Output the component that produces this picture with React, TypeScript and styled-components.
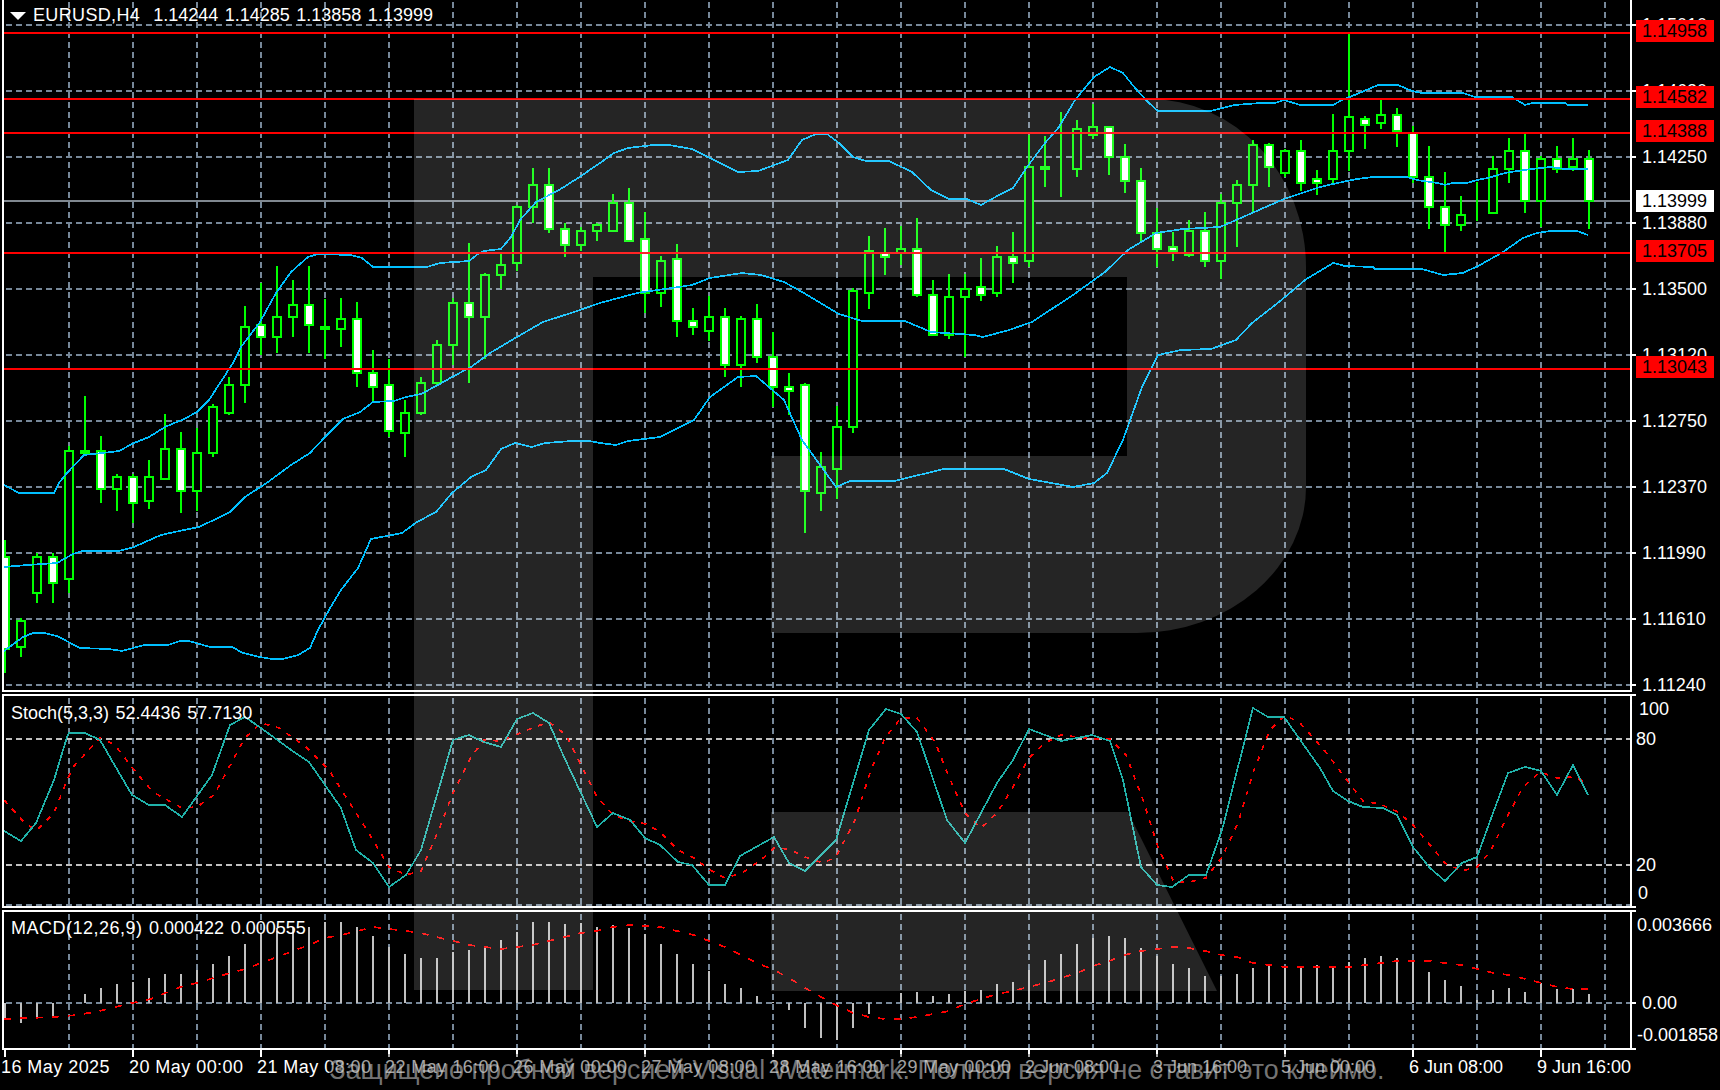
import React from 'react';
import styled, { createGlobalStyle } from 'styled-components';

const GlobalStyle = createGlobalStyle`
  html, body { margin: 0; padding: 0; background: #000; }
  #root { width: 1720px; height: 1090px; overflow: hidden; }
`;

const FONT = `"Liberation Sans", Arial, sans-serif`;
const GRID = '#778899';

// [high, bodyTop, bodyBottom, low, bearish (white body)]
const CANDLES: [number, number, number, number, number][] = [
  [540,557,649,673,1],[618,621,647,657,0],[553,557,593,603,0],[553,557,583,603,1],[446,451,579,593,0],
  [396,451,453,455,1],[436,451,489,503,1],[474,477,489,511,0],[474,477,503,523,1],[460,477,501,509,0],
  [414,449,479,479,0],[432,449,491,513,1],[428,453,491,511,0],[404,407,453,457,0],[377,385,413,415,0],
  [306,327,385,403,0],[283,325,337,355,1],[266,317,337,353,0],[280,305,317,337,0],[266,305,325,353,1],
  [299,327,329,359,1],[298,319,329,347,0],[302,319,373,387,1],[350,373,387,403,1],[359,385,431,437,1],
  [400,413,433,457,0],[377,383,413,415,0],[340,345,383,385,0],[298,303,345,365,0],[243,303,317,383,1],
  [273,275,317,359,0],[254,265,275,289,0],[205,207,263,271,0],[168,185,207,223,0],[168,185,229,233,1],
  [223,229,245,257,1],[227,231,245,251,0],[223,225,231,241,0],[194,203,231,231,0],[188,203,241,241,1],
  [212,239,293,313,1],[256,261,293,307,0],[244,259,321,337,1],[308,321,327,335,1],[296,317,331,341,0],
  [308,317,365,377,1],[316,319,365,387,0],[304,319,357,363,1],[332,357,387,407,1],[373,387,391,415,1],
  [383,385,491,533,1],[452,467,493,511,0],[406,427,469,499,0],[288,291,427,433,0],[236,251,293,309,0],
  [228,253,257,275,1],[226,249,253,265,0],[218,249,295,297,1],[280,295,335,335,1],[274,297,335,339,0],
  [274,289,297,357,0],[258,287,295,301,1],[246,257,293,297,0],[232,257,263,283,1],[135,167,261,267,0],
  [136,167,169,187,1],[112,169,169,197,1],[120,129,169,177,0],[104,127,135,139,0],[127,127,157,175,1],
  [144,157,181,193,1],[168,181,233,241,1],[208,233,249,267,1],[232,247,251,261,1],[220,231,255,257,0],
  [212,231,261,267,1],[194,203,261,279,0],[180,185,203,247,0],[140,145,185,213,0],[143,145,167,187,1],
  [149,151,173,177,0],[140,151,183,191,1],[170,179,183,195,1],[114,151,179,185,0],[34,117,151,171,0],
  [116,119,125,149,1],[100,115,123,129,0],[108,115,131,147,1],[126,133,177,183,1],[146,177,207,229,1],
  [172,207,225,253,1],[196,215,225,231,0],[182,213,213,221,1],[156,169,213,213,0],[138,151,169,183,0],
  [134,151,201,213,1],[156,159,201,227,0],[146,159,169,173,1],[138,159,167,171,0],[150,159,201,229,1],
];

const UPPER = [4,485,19,493,54,493,59,483,67,473,84,455,111,452,119,451,134,443,149,437,165,427,184,419,197,412,209,400,233,363,241,347,260,322,276,293,291,272,308,257,318,254,350,255,362,258,373,267,427,267,440,263,469,261,478,254,484,251,501,249,511,237,520,220,536,202,559,190,578,178,600,163,614,153,628,148,653,145,669,145,692,149,710,158,738,172,758,171,788,160,802,140,816,134,827,134,839,143,853,157,866,161,889,161,912,172,931,190,949,199,967,199,981,205,999,195,1013,188,1027,167,1045,143,1059,127,1075,100,1094,77,1110,67,1123,73,1135,88,1149,103,1158,111,1211,111,1234,105,1261,103,1275,103,1284,100,1300,105,1333,105,1342,100,1357,94,1378,85,1398,85,1412,91,1422,93,1463,93,1475,97,1512,97,1525,105,1532,103,1565,103,1568,105,1588,105];
const MIDDLE = [4,567,27,565,57,563,73,554,82,551,119,551,134,547,161,535,184,530,199,527,218,518,230,512,245,497,268,482,291,465,310,453,325,437,343,419,360,412,373,402,394,401,406,397,421,394,438,385,452,377,471,367,490,353,517,337,543,322,574,312,600,303,637,293,692,285,710,278,742,273,761,275,784,282,802,292,839,314,862,321,905,321,931,332,974,335,983,337,1009,330,1032,322,1073,295,1105,272,1128,250,1156,233,1183,229,1220,227,1243,217,1284,199,1320,187,1333,184,1347,181,1357,179,1373,177,1407,177,1417,180,1437,183,1445,185,1453,183,1467,183,1477,180,1488,178,1505,173,1517,171,1532,169,1550,167,1565,169,1588,169];
const LOWER = [4,651,23,637,33,633,44,633,57,636,80,648,109,649,122,651,144,645,168,645,180,641,189,641,210,647,232,647,243,653,260,657,272,659,283,659,298,655,310,648,318,630,329,610,341,590,358,568,371,539,402,533,417,522,436,512,452,493,471,477,486,470,501,449,515,443,532,447,545,443,572,441,589,441,600,443,616,445,628,441,660,437,694,420,710,397,738,377,756,376,784,400,802,440,836,487,850,481,894,481,944,469,1004,469,1029,479,1073,487,1094,483,1107,473,1123,440,1142,387,1158,355,1181,350,1211,349,1236,340,1252,323,1279,302,1305,280,1320,271,1333,263,1345,266,1373,267,1375,269,1422,269,1443,275,1463,273,1480,265,1503,252,1523,238,1537,233,1550,231,1577,231,1588,235];

const STOCH_K = [4,831,21,841,36,823,54,780,67,737,69,733,85,733,100,740,132,795,149,805,165,805,182,817,212,775,230,725,245,717,261,728,294,752,309,762,341,808,356,850,373,863,389,887,406,875,421,850,453,740,469,735,484,742,501,747,517,719,533,713,549,723,564,757,597,827,613,813,630,820,645,838,660,845,678,862,692,865,709,885,725,885,740,856,774,837,789,863,805,871,836,840,869,730,886,709,901,714,917,732,947,820,965,843,997,783,1013,760,1029,729,1061,741,1092,735,1110,741,1123,780,1141,867,1157,885,1172,887,1189,875,1206,875,1222,830,1253,708,1268,717,1284,717,1320,768,1333,791,1348,801,1363,807,1383,808,1397,815,1413,847,1430,868,1445,881,1462,863,1477,857,1493,813,1508,773,1525,767,1541,771,1557,795,1573,765,1588,795];
const STOCH_D = [4,800,23,821,36,831,54,813,63,790,73,767,100,738,115,745,134,770,153,792,182,808,197,807,214,795,233,760,245,738,261,723,279,728,306,747,329,770,346,797,373,840,389,867,406,875,421,871,440,827,453,793,471,757,484,740,501,741,532,728,549,722,566,735,582,767,597,797,613,815,630,821,646,824,660,832,678,850,694,858,710,870,725,878,742,873,761,860,774,848,789,849,805,857,823,863,836,857,855,820,871,770,885,738,901,718,917,718,935,742,949,777,965,813,981,828,997,813,1013,787,1029,758,1045,743,1061,735,1094,739,1110,739,1126,755,1142,797,1158,847,1174,882,1190,882,1206,878,1222,857,1238,823,1254,770,1270,730,1285,715,1300,723,1325,751,1343,775,1363,801,1380,804,1398,812,1413,825,1430,845,1445,863,1462,871,1477,867,1490,852,1507,817,1523,787,1540,772,1557,778,1573,777,1588,783];
const MACD_SIGNAL = [4,1019,54,1017,77,1015,100,1011,119,1006,132,1003,151,999,180,987,197,983,230,973,245,969,261,963,277,957,293,951,309,945,325,938,341,935,358,931,373,927,389,929,406,931,421,933,436,937,453,941,469,945,485,947,501,949,517,947,533,945,549,941,564,937,581,933,597,931,613,927,630,925,660,927,677,931,694,935,709,941,725,947,741,955,757,963,774,970,789,978,805,988,823,998,836,1005,853,1013,869,1017,885,1019,901,1019,917,1017,933,1014,949,1011,965,1004,981,999,997,994,1013,991,1029,987,1045,983,1061,978,1077,973,1093,966,1109,961,1125,955,1141,951,1157,949,1173,947,1189,948,1205,951,1221,955,1237,957,1253,963,1269,965,1285,967,1320,967,1349,967,1365,965,1381,963,1397,961,1429,961,1445,963,1461,965,1477,969,1493,973,1509,975,1525,979,1541,983,1557,987,1573,989,1589,989];
const MACD_BARS = [1018,1023,1018,1017,1003,994,988,984,982,978,974,974,970,964,956,944,933,928,927,927,922,922,927,936,947,954,958,958,952,950,948,940,932,922,922,924,923,927,925,928,934,944,954,964,971,984,988,996,1002,1010,1028,1038,1040,1028,1014,1003,993,992,996,994,991,990,984,982,970,960,954,944,938,936,938,948,956,964,968,976,976,974,968,965,967,967,965,967,962,958,956,958,962,972,980,986,1000,990,988,992,983,989,989,994];

const H_GRID_MAIN = [25,91,157,223,289,355,421,487,553,619,685];
const V_GRID = Array.from({ length: 25 }, (_, i) => 69 + 64 * i);
const RED_LEVELS = [33, 99, 133, 253, 369];
const AXIS_LABELS = ['1.15010','1.14630','1.14250','1.13880','1.13500','1.13120','1.12750','1.12370','1.11990','1.11610','1.11240'];
const PRICE_TAGS: [string, number, boolean][] = [
  ['1.14958',31,false],['1.14582',97,false],['1.14388',131,false],['1.13999',201,true],['1.13705',251,false],['1.13043',367,false],
];
const TIME_LABELS = ['16 May 2025','20 May 00:00','21 May 08:00','22 May 16:00','26 May 00:00','27 May 08:00','28 May 16:00','29 May 00:00','2 Jun 08:00','3 Jun 16:00','5 Jun 00:00','6 Jun 08:00','9 Jun 16:00'];

const toPoints = (flat: number[]) => {
  const out: string[] = [];
  for (let i = 0; i < flat.length; i += 2) out.push(`${flat[i]},${flat[i + 1]}`);
  return out.join(' ');
};

const Terminal = styled.div`
  position: relative;
  width: 1720px;
  height: 1090px;
  background: #000;
  color: #fff;
  font-family: ${FONT};
  display: flex;
  flex-direction: column;
  gap: 2px;
  overflow: hidden;
`;
const PaneRow = styled.div<{ $height: number }>`
  display: flex;
  height: ${p => p.$height}px;
  flex: none;
`;
const Plot = styled.div<{ $top?: boolean }>`
  position: relative;
  box-sizing: border-box;
  margin-left: 2px;
  width: 1630px;
  height: 100%;
  border-left: 2px solid #fff;
  border-right: 2px solid #fff;
  border-bottom: 2px solid #fff;
  border-top: ${p => (p.$top ? '2px solid #fff' : '0')};
`;
const Canvas = styled.svg`
  display: block;
  width: 100%;
  height: 100%;
`;
const Legend = styled.div<{ $left: number; $top: number }>`
  position: absolute;
  left: ${p => p.$left}px;
  top: ${p => p.$top}px;
  display: flex;
  align-items: center;
  gap: 7px;
  font-size: 18px;
  line-height: 22px;
  white-space: pre;
  word-spacing: 1.5px;
`;
const LegendName = styled.span<{ $spacing: number }>`
  letter-spacing: ${p => p.$spacing}px;
`;
const Scale = styled.div`
  position: relative;
  width: 88px;
  height: 100%;
  font-size: 18px;
  line-height: 22px;
  display: flex;
  flex-direction: column;
`;
const AxisStack = styled.div`
  display: flex;
  flex-direction: column;
  margin-top: -8px;
`;
const AxisRow = styled.div<{ $height: number; $indent?: number }>`
  display: flex;
  align-items: center;
  flex: none;
  height: ${p => p.$height}px;
  padding-left: ${p => p.$indent ?? 0}px;
  white-space: nowrap;
`;
const AxisTick = styled.i`
  flex: none;
  width: 4px;
  height: 2px;
  margin-right: 6px;
  background: #fff;
`;
const CornerTick = styled.i<{ $bottom?: boolean }>`
  position: absolute;
  left: 0;
  width: 4px;
  height: 2px;
  background: #fff;
  ${p => (p.$bottom ? 'bottom: 0;' : 'top: 0;')}
`;
const AxisGap = styled.div<{ $height: number }>`
  flex: none;
  height: ${p => p.$height}px;
`;
const PriceTag = styled.div<{ $y: number; $current: boolean }>`
  position: absolute;
  left: 4px;
  top: ${p => p.$y - 11}px;
  box-sizing: border-box;
  width: 78px;
  height: 22px;
  padding-left: 6px;
  background: ${p => (p.$current ? '#fff' : '#f00')};
  color: #000;
`;
const TimeAxis = styled.div`
  display: flex;
  margin-top: -2px;
  font-size: 18px;
  line-height: 22px;
`;
const TimeCell = styled.div<{ $wide: boolean }>`
  flex: none;
  display: flex;
  flex-direction: column;
  width: 128px;
  padding-left: 1px;
  box-sizing: border-box;
  white-space: nowrap;
  letter-spacing: ${p => (p.$wide ? '0.45px' : '0')};
`;
const TimeTick = styled.i`
  flex: none;
  width: 2px;
  height: 7px;
  margin-left: 3px;
  margin-bottom: -1px;
  background: #fff;
`;
const LogoOverlay = styled.svg`
  position: absolute;
  left: 0;
  top: 0;
  width: 1720px;
  height: 1090px;
  pointer-events: none;
`;
const WatermarkNote = styled.div`
  position: absolute;
  left: 329px;
  top: 1054px;
  width: 1056px;
  height: 36px;
  background: rgba(0, 0, 0, 0.36);
  color: rgba(205, 205, 205, 0.58);
  font-size: 26.8px;
  line-height: 32px;
  text-align: center;
  white-space: nowrap;
  pointer-events: none;
`;
const MenuArrow = styled.svg`
  display: block;
  width: 16px;
  height: 8px;
  margin-top: 2px;
`;

const GridLines: React.FC<{ y0: number; y1: number; rows: number[]; levels?: number[] }> = ({ y0, y1, rows, levels = [] }) => (
  <g strokeWidth={2} fill="none">
    {V_GRID.map(x => (
      <line key={x} x1={x} x2={x} y1={y0 + 2} y2={y1} stroke={GRID} strokeDasharray="6 4" />
    ))}
    {rows.map(y => (
      <line key={y} x1={6} x2={1630} y1={y} y2={y} stroke={GRID} strokeDasharray="6 4" />
    ))}
    {levels.map(y => (
      <line key={y} x1={6} x2={1630} y1={y} y2={y} stroke="#c0c0c0" strokeDasharray="6 4" />
    ))}
  </g>
);

const Candles: React.FC = () => (
  <g stroke="#0f0" strokeWidth={2}>
    {CANDLES.map(([h, t, b, l, bear], i) => {
      const x = 5 + 16 * i;
      return (
        <g key={i}>
          <line x1={x} x2={x} y1={h} y2={t} />
          <line x1={x} x2={x} y1={b} y2={l} />
          <rect x={x - 4} y={t} width={8} height={b - t} fill={bear ? '#fff' : '#000'} />
        </g>
      );
    })}
  </g>
);

const Series: React.FC<{ data: number[]; color: string; dash?: string }> = ({ data, color, dash }) => (
  <polyline points={toPoints(data)} fill="none" stroke={color} strokeWidth={1.7} strokeDasharray={dash} />
);

const MainPane: React.FC = () => (
  <PaneRow $height={692}>
    <Plot>
      <Canvas viewBox="4 0 1626 690" shapeRendering="crispEdges">
        <GridLines y0={0} y1={690} rows={H_GRID_MAIN} />
        <line x1={4} x2={1630} y1={201} y2={201} stroke="#808890" strokeWidth={2} />
        <Candles />
        <Series data={UPPER} color="#00bfff" />
        <Series data={MIDDLE} color="#00bfff" />
        <Series data={LOWER} color="#00bfff" />
        {RED_LEVELS.map(y => (
          <line key={y} x1={4} x2={1630} y1={y} y2={y} stroke="#f00" strokeWidth={2} />
        ))}
      </Canvas>
      <Legend $left={6} $top={4}>
        <MenuArrow viewBox="0 0 16 8"><polygon points="0,0 16,0 8,8" fill="#fff" /></MenuArrow>
        <span><LegendName $spacing={0.35}>EURUSD,H4</LegendName>  1.14244 1.14285 1.13858 1.13999</span>
      </Legend>
    </Plot>
    <Scale>
      <AxisStack>
        {AXIS_LABELS.map(t => (
          <AxisRow key={t} $height={66}>
            <AxisTick />
            {t}
          </AxisRow>
        ))}
      </AxisStack>
      {PRICE_TAGS.map(([t, y, cur]) => (
        <PriceTag key={t} $y={y} $current={cur}>{t}</PriceTag>
      ))}
    </Scale>
  </PaneRow>
);

const StochPane: React.FC = () => (
  <PaneRow $height={214}>
    <Plot $top>
      <Canvas viewBox="4 696 1626 210" shapeRendering="crispEdges">
        <GridLines y0={696} y1={906} rows={[905]} levels={[739, 865]} />
        <Series data={STOCH_D} color="#f00" dash="5 7" />
        <Series data={STOCH_K} color="#20b2aa" />
      </Canvas>
      <Legend $left={7} $top={6}>
        <span><LegendName $spacing={0}>Stoch(5,3,3)</LegendName> 52.4436 57.7130</span>
      </Legend>
    </Plot>
    <Scale>
      <CornerTick />
      <CornerTick $bottom />
      <AxisRow $height={30} $indent={7}>100</AxisRow>
      <AxisRow $height={30} $indent={4}>80</AxisRow>
      <AxisGap $height={96} />
      <AxisRow $height={30} $indent={4}>20</AxisRow>
      <AxisRow $height={26} $indent={6}>0</AxisRow>
    </Scale>
  </PaneRow>
);

const MacdPane: React.FC = () => (
  <PaneRow $height={140}>
    <Plot $top>
      <Canvas viewBox="4 912 1626 136" shapeRendering="crispEdges">
        <GridLines y0={912} y1={1048} rows={[1003]} />
        <g stroke="#c0c0c0" strokeWidth={2}>
          {MACD_BARS.map((y, i) => (
            <line key={i} x1={5 + 16 * i} x2={5 + 16 * i} y1={1003} y2={y} />
          ))}
        </g>
        <Series data={MACD_SIGNAL} color="#f00" dash="7 9" />
      </Canvas>
      <Legend $left={7} $top={5}>
        <span><LegendName $spacing={0.5}>MACD(12,26,9)</LegendName> 0.000422 0.000555</span>
      </Legend>
    </Plot>
    <Scale>
      <CornerTick />
      <CornerTick $bottom />
      <AxisRow $height={30} $indent={5}>0.003666</AxisRow>
      <AxisGap $height={48} />
      <AxisRow $height={30}>
        <AxisTick />
        0.00
      </AxisRow>
      <AxisRow $height={34} $indent={5}>-0.001858</AxisRow>
    </Scale>
  </PaneRow>
);

export default function App() {
  return (
    <Terminal>
      <GlobalStyle />
      <MainPane />
      <StochPane />
      <MacdPane />
      <TimeAxis>
        {TIME_LABELS.map(t => (
          <TimeCell key={t} $wide={t.includes('May')}>
            <TimeTick />
            {t}
          </TimeCell>
        ))}
      </TimeAxis>
      <LogoOverlay viewBox="0 0 1720 1090">
        <path
          d="M414 99 H1149 A157 168 0 0 1 1306 267 V487 A169 146 0 0 1 1137 633 H771 V456 H1127 V277 H593 V990 H414 Z M771 812 H1128 L1217 991 H771 Z"
          fill="rgba(255,255,255,0.145)"
        />
      </LogoOverlay>
      <WatermarkNote>Защищено пробной версией Visual Watermark. Полная версия не ставит это клеймо.</WatermarkNote>
    </Terminal>
  );
}
